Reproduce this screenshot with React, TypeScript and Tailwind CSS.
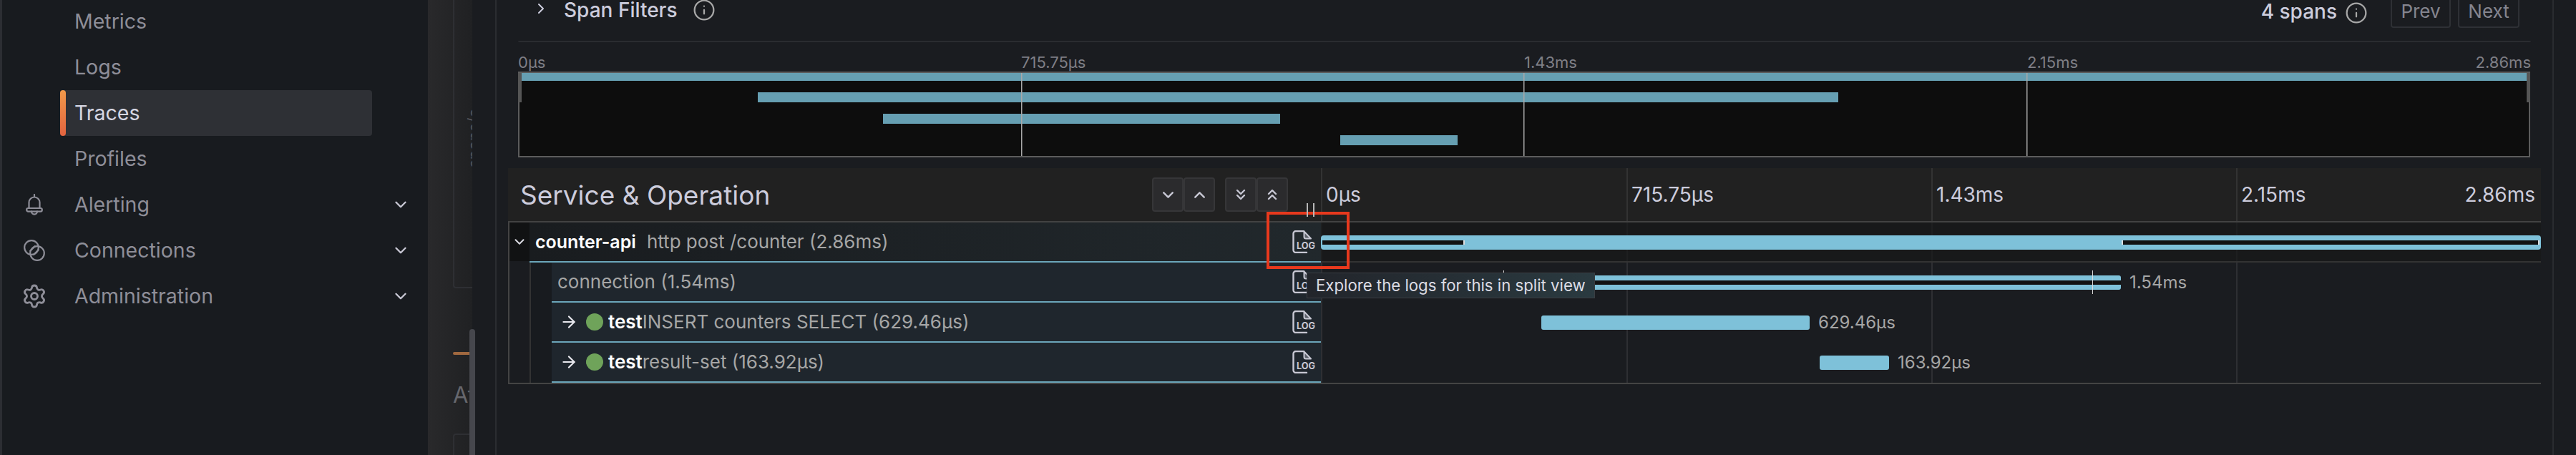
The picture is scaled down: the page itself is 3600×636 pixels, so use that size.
import { ArrowRight, ChevronDown, ChevronRight, ChevronsDown, ChevronsUp, ChevronUp, Info, Settings } from "lucide-react"

const LogIcon = () => (
  <svg width="32" height="32" viewBox="0 0 32 32" fill="none" className="text-[#c8c8d4] shrink-0">
    <path d="M20 31H5a3.5 3.5 0 0 1-3.5-3.5V4.5A3.5 3.5 0 0 1 5 1h11" stroke="currentColor" strokeWidth="2.4" strokeLinecap="round" />
    <path d="M16.5 1.5 26 11.5H19a2.5 2.5 0 0 1-2.5-2.5z" stroke="currentColor" strokeWidth="2" fill="currentColor" fillOpacity="0.35" strokeLinejoin="round" />
    <text x="6" y="26" fontFamily="Inter, sans-serif" fontWeight="700" fontSize="12.5" fill="currentColor" textLength="26" lengthAdjust="spacingAndGlyphs">LOG</text>
  </svg>
)

const BellIcon = () => (
  <svg width="24" height="30" viewBox="0 0 24 30" fill="none" stroke="#8e8e98" strokeWidth="2.2" strokeLinecap="round">
    <path d="M12 1v3" />
    <path d="M4.5 20v-8a7.5 7.5 0 0 1 15 0v8" />
    <rect x="1.2" y="20" width="21.6" height="4.6" rx="2.2" />
    <path d="M8 24.6a4 4 0 0 0 8 0" />
  </svg>
)

const ConnectionsIcon = () => (
  <svg width="30" height="30" viewBox="0 0 30 30" fill="none" stroke="#8e8e98" strokeWidth="2.2">
    <circle cx="11" cy="11" r="9.8" />
    <circle cx="19" cy="19" r="9.8" />
    <path d="m8.5 16.5 8-8M13.5 21.5l8-8" />
  </svg>
)

const NavRow = ({ label, icon, active, chevron }: { label: string; icon?: any; active?: boolean; chevron?: boolean }) => (
  <div className="flex items-center h-[64px]">
    <div className="w-[84px] flex justify-center pl-[12px] shrink-0">{icon}</div>
    <div className={`w-[436px] h-[64px] flex items-center pl-[20px] rounded-[4px] relative ${active ? "bg-[#2e3035] text-[#d6d6e2]" : "text-[#8e8e98]"}`}>
      {active && <div className="absolute left-0 top-0 bottom-0 w-[8px] rounded-[4px] bg-gradient-to-b from-[#f2994a] to-[#e2633f]" />}
      {label}
    </div>
    {chevron && <ChevronDown size={26} strokeWidth={2.2} className="ml-[27px] text-[#c8c8d4]" />}
  </div>
)

const Sidebar = () => (
  <div className="w-[598px] shrink-0 bg-[#181b1f] border-l-[3px] border-[#2c2e33] text-[28.5px] leading-none">
    <div className="-mt-[2px] -ml-[3px]">
      <NavRow label="Metrics" />
      <NavRow label="Logs" />
      <NavRow label="Traces" active />
      <NavRow label="Profiles" />
      <NavRow label="Alerting" icon={<BellIcon />} chevron />
      <NavRow label="Connections" icon={<ConnectionsIcon />} chevron />
      <NavRow label="Administration" icon={<Settings size={36} strokeWidth={1.9} className="text-[#8e8e98]" />} chevron />
    </div>
  </div>
)

const MiddleBand = () => (
  <div className="w-[62px] shrink-0 relative">
    <div className="h-full bg-gradient-to-r from-[#29292b] to-[#202123] pl-[35px] relative overflow-hidden flex flex-col">
      <div className="h-[403px] border-l-2 border-b-2 border-[#2e2f33] rounded-bl-[4px] relative shrink-0">
        <span className="absolute left-[16px] top-[152px] text-[22px] text-[#55565c] leading-none [writing-mode:vertical-rl] rotate-180 whitespace-nowrap">spans/c</span>
      </div>
      <div className="h-[4px] w-[25px] mt-[89px] bg-[#a0683f] rounded-l-[2px] shrink-0" />
      <div className="text-[31px] leading-none text-[#66676d] mt-[40px] shrink-0">At</div>
      <div className="flex-1 mt-[39px] border-l-2 border-t-2 border-[#2e2f33] rounded-tl-[4px]" />
    </div>
    <div className="absolute -right-[4px] top-[460px] bottom-0 w-[8px] rounded-t-[4px] bg-[#46474d]" />
  </div>
)

const Minimap = () => (
  <svg width="2812" height="120" viewBox="0 0 2812 120" className="block shrink-0">
    <rect x="0" y="0" width="2812" height="120" fill="#0d0d0d" />
    <rect x="5" y="2" width="2803" height="11" fill="#669fb2" />
    <rect x="335" y="29" width="1510" height="14" fill="#669fb2" />
    <rect x="510" y="59" width="555" height="14" fill="#669fb2" />
    <rect x="1149" y="89" width="164" height="14" fill="#669fb2" />
    <rect x="703" y="2" width="1.5" height="117" fill="#a8a8a8" />
    <rect x="1405" y="2" width="1.5" height="117" fill="#a8a8a8" />
    <rect x="2108" y="2" width="1.5" height="117" fill="#a8a8a8" />
    <rect x="1" y="1" width="2810" height="118" fill="none" stroke="#5c5c5c" strokeWidth="2" />
    <rect x="0" y="2" width="5" height="41" fill="#555" />
    <rect x="2807" y="2" width="5" height="41" fill="#555" />
  </svg>
)

const TreeButton = ({ children, gap }: { children: any; gap?: boolean }) => (
  <div className={`w-[44px] h-[48px] flex items-center justify-center rounded-[4px] bg-[#2b2b2d] border-2 border-[#363638] text-[#c8c8d4] ${gap ? "ml-[14px]" : ""}`}>{children}</div>
)

const rows = [
  { name: "", op: "connection (1.54ms)", bar: "ml-[201px] w-[917px]", hollow: true, time: "1.54ms" },
  { name: "test", op: "INSERT counters SELECT (629.46µs)", bar: "ml-[308px] w-[375px]", time: "629.46µs" },
  { name: "test", op: "result-set (163.92µs)", bar: "ml-[697px] w-[97px]", time: "163.92µs" },
]

const SpanTable = () => (
  <div className="w-[2841px] ml-[16px] mt-[15px] relative shrink-0">
    <div className="flex h-[76px] bg-[#212121] border-b-2 border-[#424242]">
      <div className="w-[1136px] shrink-0 flex items-center pl-[17px] pr-[46px]">
        <span className="text-[37px] leading-none text-[#ccccdc] mr-auto">Service &amp; Operation</span>
        <div className="flex">
          <TreeButton><ChevronDown size={25} strokeWidth={2.3} /></TreeButton>
          <TreeButton><ChevronUp size={25} strokeWidth={2.3} /></TreeButton>
          <TreeButton gap><ChevronsDown size={24} strokeWidth={2.4} /></TreeButton>
          <TreeButton><ChevronsUp size={24} strokeWidth={2.4} /></TreeButton>
        </div>
      </div>
      <div className="flex-1 flex text-[28px] leading-none text-[#ccccdc]">
        <div className="w-[427px] border-l-2 border-[#333] pl-[5px] flex items-center">0µs</div>
        <div className="w-[426px] border-l-2 border-[#333] pl-[5px] flex items-center">715.75µs</div>
        <div className="w-[426px] border-l-2 border-[#333] pl-[5px] flex items-center">1.43ms</div>
        <div className="flex-1 border-l-2 border-[#333] pl-[5px] pr-[8px] flex items-center justify-between">
          <span>2.15ms</span>
          <span>2.86ms</span>
        </div>
      </div>
    </div>

    <div className="relative border-b-2 border-l-2 border-[#444]">
      <div className="absolute left-[1561px] top-0 bottom-0 w-[2px] bg-[#2e2f33]" />
      <div className="absolute left-[1987px] top-0 bottom-0 w-[2px] bg-[#2e2f33]" />
      <div className="absolute left-[2413px] top-0 bottom-0 w-[2px] bg-[#2e2f33]" />
      <div className="absolute left-[1134px] top-0 bottom-0 w-[2px] bg-[#2e2f33]" />

      <div className="flex h-[56px] relative">
        <div className="w-[28px] h-[54px] bg-[#111213] flex items-center justify-center text-[#d8d8e0] shrink-0">
          <ChevronDown size={22} strokeWidth={2.2} />
        </div>
        <div className="w-[1106px] shrink-0 flex items-center pl-[8px] pr-[8px] border-b-2 border-[#6ba6ba] bg-gradient-to-r from-[#191c1f] to-[#21282c] text-[26px] leading-none">
          <span className="font-semibold text-white mr-[15px] text-[25px]">counter-api</span>
          <span className="text-[#a6a6a6]">http post /counter (2.86ms)</span>
          <span className="ml-auto"><LogIcon /></span>
        </div>
        <div className="flex-1 bg-[#181818]/70 border-b-2 border-[#333] pt-[18px]">
          <div className="h-[20px] w-[1705px] rounded-[4px] bg-[#7ec1d9] flex items-center justify-between pl-[2px] pr-[2px]">
            <div className="w-[199px] h-[6px] bg-[#121212] border-r-2 border-[#ddd]" />
            <div className="w-[584px] h-[6px] bg-[#121212] border-l-2 border-r-2 border-[#ddd]" />
          </div>
        </div>
      </div>

      {rows.map((r) => (
        <div key={r.op} className="flex h-[56px] relative">
          <div className="w-[28px] shrink-0" />
          <div className="w-[31px] shrink-0 border-l-2 border-[#333] bg-[#181b1f]" />
          <div className="w-[1075px] shrink-0 flex items-center pr-[8px] border-b-2 border-[#6ba6ba] bg-[#1f262d] text-[26px] leading-none">
            {r.name ? (
              <>
                <ArrowRight size={26} strokeWidth={2} className="ml-[11px] text-[#e8e8ee]" />
                <span className="ml-[11px] mr-[7px] w-[24px] h-[24px] rounded-full bg-[#6fa35a]" />
                <span className="font-semibold text-white">{r.name}</span>
              </>
            ) : <span className="w-[8px]" />}
            <span className="text-[#a6a6a6]">{r.op}</span>
            <span className="ml-auto"><LogIcon /></span>
          </div>
          <div className="flex-1 flex items-center relative">
            <div className={`h-[20px] rounded-[3px] bg-[#7ec1d9] flex items-center relative ${r.bar}`}>
              {r.hollow && <div className="w-full h-[6px] bg-[#121212]" />}
              {r.hollow && <div className="absolute left-[877px] -top-[7px] h-[33px] w-[1px] bg-[#ddd]" />}
              {r.hollow && <div className="absolute left-[54px] -top-[7px] h-[33px] w-[1px] bg-[#ddd]" />}
            </div>
            <span className="ml-[12px] text-[24px] leading-none text-[#a6a6a6]">{r.time}</span>
          </div>
        </div>
      ))}
    </div>

    {/* callout drawn on top of the screenshot */}
    <div className="absolute left-[1060px] top-[61px] w-[116px] h-[80px] border-[4px] border-[#e8391d]" />
    <div className="absolute left-[1116px] top-[49px] h-[19px] w-[11px] border-x-2 border-[#b8b8b8]" />
    <div className="absolute left-[1116px] top-[146px] w-[403px] h-[36px] flex items-center pl-[12px] bg-gradient-to-r from-[#22252b] to-[#2a3a40] border border-[#3a3d42] text-[22.2px] leading-none text-[#dcdce4] whitespace-nowrap">
      Explore the logs for this in split view
    </div>
  </div>
)

const Main = () => (
  <div className="w-[2877px] shrink-0 ml-[32px] border-x-2 border-[#2a2c30] bg-[#1a1c20] flex flex-col">
    <div className="h-[57px] mx-[30px] flex items-start shrink-0">
      <ChevronRight size={24} strokeWidth={2} className="ml-[20px] text-[#ccccdc]" />
      <span className="ml-[20px] mt-[1px] text-[28px] leading-[26px] font-medium text-[#ccccdc]">Span Filters</span>
      <Info size={32} strokeWidth={1.7} className="ml-[21px] -mt-[2px] text-[#a8a8a8]" />
      <span className="ml-auto mt-[3px] text-[28px] leading-[26px] font-medium text-[#ccccdc]">4 spans</span>
      <Info size={32} strokeWidth={1.7} className="ml-[11px] mt-[2px] text-[#a8a8a8]" />
      <div className="ml-[32px] -mt-[9px] w-[84px] h-[48px] rounded-[4px] border-2 border-[#2e3035] flex items-center justify-center text-[26px] text-[#85858f]">Prev</div>
      <div className="ml-[10px] -mt-[9px] w-[86px] h-[48px] rounded-[4px] border-2 border-[#2e3035] flex items-center justify-center text-[26px] text-[#85858f]">Next</div>
      <div className="w-[16px]" />
    </div>
    <div className="mx-[30px] h-[2px] bg-[#2a2c30] shrink-0 rounded-b-[2px]" />
    <div className="mx-[30px] mt-[14px] h-[27px] flex items-center text-[22px] leading-none text-[#7f7f86] shrink-0">
      <span className="w-[703px]">0µs</span>
      <span className="w-[703px]">715.75µs</span>
      <span className="w-[703px]">1.43ms</span>
      <span>2.15ms</span>
      <span className="ml-auto">2.86ms</span>
    </div>
    <div className="ml-[30px]"><Minimap /></div>
    <SpanTable />
  </div>
)

export default function App() {
  return (
    <div className="w-[3600px] h-[636px] overflow-hidden flex bg-[#1a1c20] font-['Inter',sans-serif]">
      <Sidebar />
      <MiddleBand />
      <Main />
    </div>
  )
}
